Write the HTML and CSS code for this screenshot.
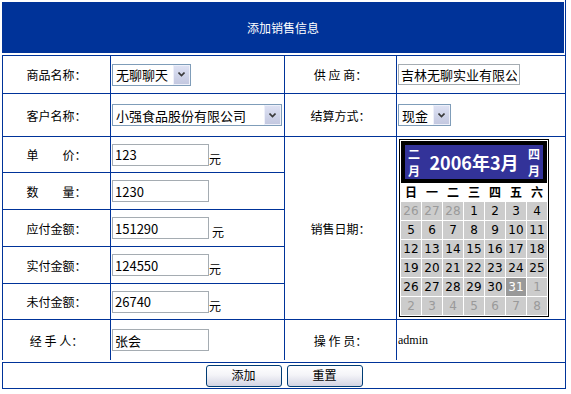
FILE: index.html
```html
<!DOCTYPE html>
<html lang="zh-CN">
<head>
<meta charset="utf-8">
<title>添加销售信息</title>
<link rel="stylesheet" href="styles.css">
</head>
<body>
<div class="page">
  <div class="title">添加销售信息</div>
  <form class="sheet">
    <div class="lbl">商品名称：</div>
    <div class="val">
      <span class="sel sel-goods"><select><option>无聊聊天</option></select><span class="arr"><svg width="7" height="5" viewBox="0 0 7 5"><path d="M0.5 0.5 L3.5 3.5 L6.5 0.5" fill="none" stroke="#3a3a3a" stroke-width="1.6"/></svg></span></span>
    </div>
    <div class="lbl">供 应 商：</div>
    <div class="val"><input class="txt txt-sup" type="text" value="吉林无聊实业有限公司"></div>

    <div class="lbl">客户名称：</div>
    <div class="val">
      <span class="sel sel-cust"><select><option>小强食品股份有限公司</option></select><span class="arr"><svg width="7" height="5" viewBox="0 0 7 5"><path d="M0.5 0.5 L3.5 3.5 L6.5 0.5" fill="none" stroke="#3a3a3a" stroke-width="1.6"/></svg></span></span>
    </div>
    <div class="lbl">结算方式：</div>
    <div class="val">
      <span class="sel sel-pay"><select><option>现金</option></select><span class="arr"><svg width="7" height="5" viewBox="0 0 7 5"><path d="M0.5 0.5 L3.5 3.5 L6.5 0.5" fill="none" stroke="#3a3a3a" stroke-width="1.6"/></svg></span></span>
    </div>

    <div class="lbl date-lbl">销售日期：</div>
    <div class="val cal-cell">
      <div class="cal">
        <div class="cal-head">
          <div class="cal-bar">
            <span class="nav"><span>二</span><span>月</span></span>
            <span class="cal-title">2006年3月</span>
            <span class="nav"><span>四</span><span>月</span></span>
          </div>
        </div>
        <div class="week"><span>日</span><span>一</span><span>二</span><span>三</span><span>四</span><span>五</span><span>六</span></div>
        <div class="days">
          <span class="off">26</span><span class="off">27</span><span class="off">28</span><span>1</span><span>2</span><span>3</span><span>4</span>
          <span>5</span><span>6</span><span>7</span><span>8</span><span>9</span><span>10</span><span>11</span>
          <span>12</span><span>13</span><span>14</span><span>15</span><span>16</span><span>17</span><span>18</span>
          <span>19</span><span>20</span><span>21</span><span>22</span><span>23</span><span>24</span><span>25</span>
          <span>26</span><span>27</span><span>28</span><span>29</span><span>30</span><span class="cur">31</span><span class="off">1</span>
          <span class="off">2</span><span class="off">3</span><span class="off">4</span><span class="off">5</span><span class="off">6</span><span class="off">7</span><span class="off">8</span>
        </div>
      </div>
    </div>

    <div class="lbl">单　　价：</div>
    <div class="val"><span class="field"><input class="txt" type="text" value="123"><span class="unit">元</span></span></div>

    <div class="lbl">数　　量：</div>
    <div class="val"><span class="field"><input class="txt" type="text" value="1230"></span></div>

    <div class="lbl">应付金额：</div>
    <div class="val"><span class="field"><input class="txt" type="text" value="151290"><span class="unit unit-gap">元</span></span></div>

    <div class="lbl">实付金额：</div>
    <div class="val"><span class="field"><input class="txt" type="text" value="124550"><span class="unit">元</span></span></div>

    <div class="lbl">未付金额：</div>
    <div class="val"><span class="field"><input class="txt" type="text" value="26740"><span class="unit">元</span></span></div>

    <div class="lbl">经 手 人：</div>
    <div class="val"><input class="txt" type="text" value="张会"></div>
    <div class="lbl">操 作 员：</div>
    <div class="val"><span class="plain">admin</span></div>
  </form>
  <div class="actions">
    <button class="btn" type="button">添加</button>
    <button class="btn" type="button">重置</button>
  </div>
</div>
</body>
</html>
```
FILE: styles.css
```css
* { box-sizing: border-box; }
html, body { margin: 0; padding: 0; background: #fff; }
body {
  font-family: "Noto Sans CJK SC", "Noto Sans", sans-serif;
  font-size: 12px;
  color: #000;
}
.page {
  width: 566px;
  padding: 2px 0 0 2px;
  border-right: 1px solid #003399;
}
.title {
  width: 562px;
  height: 51px;
  background: #003399;
  color: #fff;
  display: flex;
  align-items: center;
  justify-content: center;
  margin-bottom: 2px;
}
.sheet {
  margin: 0;
  width: 563px;
  display: grid;
  grid-template-columns: 107px 173px 111px 168px;
  grid-template-rows: 37px 42px 35px 36px 36px 36px 35px 40px;
  gap: 1px;
  padding: 1px 0 0 1px;
  background: #003399;
}
.lbl {
  background: #fff;
  display: flex;
  align-items: center;
  justify-content: center;
  white-space: pre;
}
.val {
  background: #fff;
  display: flex;
  align-items: center;
  padding-left: 1px;
}
.date-lbl { grid-column: 3; grid-row: 3 / 8; }
.cal-cell { grid-column: 4; grid-row: 3 / 8; }

.sel { position: relative; display: inline-block; height: 22px; }
.sel select {
  appearance: none;
  -webkit-appearance: none;
  width: 100%;
  height: 22px;
  margin: 0;
  border: 1px solid #7f9db9;
  border-radius: 0;
  background: #fff;
  padding: 0 18px 0 3px;
  font-family: "Noto Sans CJK SC", sans-serif;
  font-size: 13px;
  color: #000;
  outline: none;
}
.sel-goods { width: 79px; }
.sel-cust { width: 170px; }
.sel-pay { width: 53px; }
.arr {
  position: absolute;
  top: 1px;
  right: 1px;
  bottom: 1px;
  width: 17px;
  border: 1px solid #eef0fa;
  background: linear-gradient(#dde1f3, #c3c8e0);
  display: flex;
  align-items: center;
  justify-content: center;
  pointer-events: none;
}
.arr svg { display: block; }

.field { display: flex; align-items: flex-end; }
.txt {
  width: 97px;
  height: 22px;
  margin: 0;
  border: 1px solid #a5acb2;
  padding: 0 2px;
  font-family: "Noto Sans CJK SC", sans-serif;
  font-size: 13px;
  color: #000;
  background: #fff;
  outline: none;
}
.txt-sup { width: 122px; height: 21px; }
.unit { line-height: 15px; }
.unit-gap { margin-left: 3px; }
.plain { font-family: "Liberation Serif", serif; font-size: 12px; }

.cal {
  width: 150px;
  margin-left: 1px;
  border: 1px solid #000;
  padding: 1px;
  background: #fff;
}
.cal-head { background: #000; padding: 4px; }
.cal-bar {
  height: 34px;
  background: #333399;
  color: #fff;
  display: flex;
  align-items: center;
  justify-content: space-between;
  padding: 0 3px;
}
.nav {
  display: flex;
  flex-direction: column;
  font-size: 12px;
  line-height: 17px;
  font-weight: bold;
}
.cal-title { font-size: 18px; font-weight: bold; line-height: 24px; }
.week {
  display: grid;
  grid-template-columns: repeat(7, 20px);
  column-gap: 1px;
  height: 18px;
  align-items: center;
  justify-items: center;
  font-weight: bold;
  font-size: 12px;
  line-height: 18px;
}
.days {
  margin-top: 1px;
  display: grid;
  grid-template-columns: repeat(7, 20px);
  grid-auto-rows: 18px;
  gap: 1px;
}
.days span {
  background: #cccccc;
  display: flex;
  align-items: center;
  justify-content: center;
  font-family: "DejaVu Sans", sans-serif;
  font-size: 12px;
  color: #000;
}
.days .off { color: #9a9a9a; }
.days .cur { background: #999999; color: #fff; }

.actions {
  width: 563px;
  height: 27px;
  margin-top: 2px;
  border: 1px solid #003399;
  border-right: none;
  display: flex;
  align-items: center;
  justify-content: center;
  gap: 5px;
}
.btn {
  width: 76px;
  height: 22px;
  margin: 0;
  padding: 0 0 2px;
  border: 1px solid #003c74;
  border-radius: 3px;
  background: linear-gradient(#ffffff, #f4f4f8 45%, #d3d4e3);
  font-family: "Noto Sans CJK SC", sans-serif;
  font-size: 12px;
  color: #000;
}
```
